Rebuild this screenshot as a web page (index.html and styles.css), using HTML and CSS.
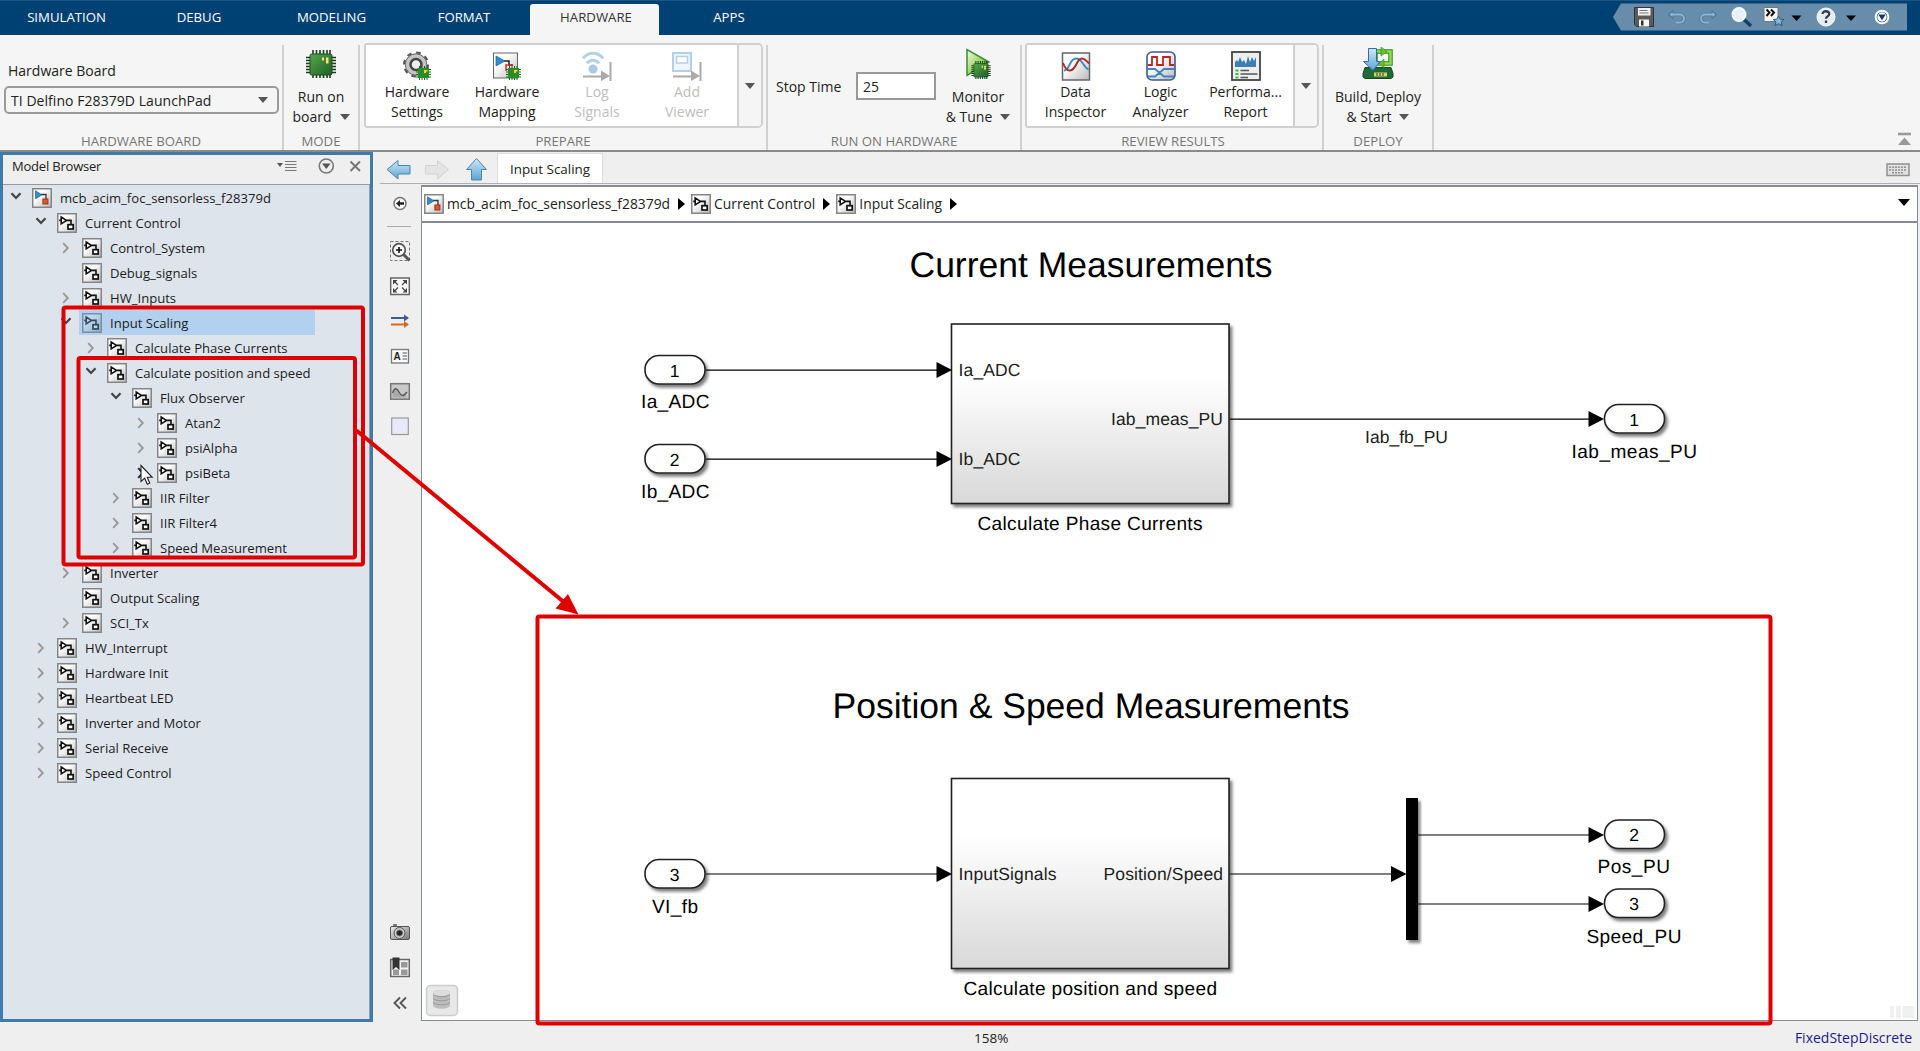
FILE: index.html
```html
<!DOCTYPE html>
<html lang="en">
<head>
<meta charset="utf-8">
<title>mcb_acim_foc_sensorless_f28379d - Simulink</title>
<link rel="stylesheet" href="styles.css">
</head>
<body>
<svg class="defs" width="0" height="0" aria-hidden="true">
  <defs>
    <linearGradient id="g-gray" x1="0" y1="0" x2="1" y2="1"><stop offset=".35" stop-color="#fff"/><stop offset="1" stop-color="#b9b9b9"/></linearGradient>
    <linearGradient id="g-block" x1="0" y1="0" x2="0" y2="1"><stop offset=".3" stop-color="#fff"/><stop offset="1" stop-color="#d8d8d8"/></linearGradient>
    <linearGradient id="g-chip" x1="0" y1="0" x2="1" y2="1"><stop offset="0" stop-color="#55a848"/><stop offset="1" stop-color="#1f5f2b"/></linearGradient>
    <linearGradient id="g-blue" x1="0" y1="0" x2="0" y2="1"><stop offset="0" stop-color="#cfe8f8"/><stop offset="1" stop-color="#5ba4d4"/></linearGradient>
    <linearGradient id="g-play" x1="0" y1="0" x2="1" y2="1"><stop offset="0" stop-color="#f2fbe6"/><stop offset=".7" stop-color="#7ec83a"/></linearGradient>
    <linearGradient id="g-metal" x1="0" y1="0" x2="1" y2="1"><stop offset="0" stop-color="#eee"/><stop offset="1" stop-color="#777"/></linearGradient>
  </defs>
  <symbol id="i-sub" viewBox="0 0 20 20"><rect x=".75" y=".75" width="18.5" height="18.5" fill="url(#g-gray)" stroke="#858585" stroke-width="1.5"/><path d="M4.200 4v6.800l5.300-3.400zM9.500 7.400h4.500v4.600M2.200 7.400h2" fill="none" stroke="#111" stroke-width="1.600"/><rect x="11" y="11.700" width="5.200" height="4.300" fill="#fff" stroke="#111" stroke-width="1.700"/></symbol>
  <symbol id="i-model" viewBox="0 0 20 20"><rect x=".75" y=".75" width="18.5" height="18.5" fill="url(#g-gray)" stroke="#858585" stroke-width="1.5"/><path d="M9 6.500h5v5" fill="none" stroke="#333" stroke-width="1.300"/><path d="M3.500 2.800v8l6.500-4z" fill="#2f8fd0" stroke="#1c5f94" stroke-width=".7"/><rect x="10.900" y="11" width="5" height="5" fill="#e2552a" stroke="#9a3512"/></symbol>
  <symbol id="i-open" viewBox="0 0 12 8"><path d="M1.500 1.200 6 6l4.500-4.800" fill="none" stroke="#444" stroke-width="2.200"/></symbol>
  <symbol id="i-closed" viewBox="0 0 8 12"><path d="M1.200 1.200 5.800 6l-4.600 4.800" fill="none" stroke="currentColor" stroke-width="1.900"/></symbol>
  <symbol id="i-chip" viewBox="0 0 30 28"><path d="M7 0v28M10.500 0v28M14 0v28M17.500 0v28M21 0v28M24 0v28M0 7.500h30M0 10.500h30M0 13.500h30M0 16.500h30M0 19.500h30M0 22.500h30" stroke="#173d1c" stroke-width="1.6"/><rect x="4" y="4" width="22" height="21" rx="1.500" fill="url(#g-chip)" stroke="#1b4f22"/><path d="M16 7.500h2v3h-2zM20 7.500h2.500v6H20z" fill="#ffe27a"/></symbol>
  <symbol id="i-minichip" viewBox="0 0 15 14"><path d="M3.500 0v14M6 0v14M8.500 0v14M11 0v14M0 3.500h15M0 6h15M0 8.500h15M0 11h15" stroke="#1b6a1b" stroke-width="1"/><rect x="2" y="2" width="11" height="10" fill="#2c8a2c"/><path d="M8 4h2v3H8zM10 4h1.500v1.500H10z" fill="#ffd91a"/></symbol>
</svg>

<header class="tabs">
  <nav class="tab-list">
    <a class="tab t-sim">SIMULATION</a><a class="tab t-debug">DEBUG</a><a class="tab t-model">MODELING</a><a class="tab t-format">FORMAT</a><a class="tab t-hw active">HARDWARE</a><a class="tab t-apps">APPS</a>
  </nav>
  <svg class="qat" width="294" height="28" viewBox="1613 3.500 294 28">
    <path d="M1613 17.500 1621 4h286v27h-286z" fill="#688dab"/>
    <path d="M1634.500 8h19v19h-17l-2-2z" fill="#5b5b5b" stroke="#333"/><path d="M1638 8.500h12.500v7.500H1638z" fill="#f2f2f2"/><path d="M1639.500 11h8M1639.500 13.500h9" stroke="#777"/><path d="M1639 20h10v7h-10z" fill="#f5f5f5"/><path d="M1641 21h2.500v5h-2.500z" fill="#333"/>
    <g fill="none" stroke="#4b7a9f" stroke-width="3.600"><path d="M1671 15h9a4 4 0 0 1 0 8h-4"/><path d="M1714 15h-9a4 4 0 0 0 0 8h4"/></g><path d="m1667.500 15 6-5v10zM1717.500 15l-6-5v10z" fill="#4b7a9f"/>
    <g fill="none" stroke="#8fb6d2" stroke-width="1.800"><path d="M1671 15h9a4 4 0 0 1 0 8h-4"/><path d="M1714 15h-9a4 4 0 0 0 0 8h4"/></g><path d="m1669.500 15 3-2.500v5zM1715.500 15l-3-2.500v5z" fill="#8fb6d2"/>
    <path d="m1743 19 8 7.500" stroke="#123e68" stroke-width="3.500"/><circle cx="1739" cy="15" r="6.500" fill="#e4eff7" stroke="#fafdff" stroke-width="2"/>
    <rect x="1764" y="8" width="14" height="14" fill="#f4f4f4" stroke="#777"/><path d="m1766.500 10 3 3-3 3.500M1771 10l3 3-3 3.500" fill="none" stroke="#111" stroke-width="2"/><path d="m1778.500 16.500 1.700 3.200 3.800.3-2.800 2.500 1 3.700-3.700-2-3.500 2 1-3.700-2.800-2.500 3.700-.3z" fill="#86b6dc" stroke="#33597c"/>
    <path d="M1791.500 16h10l-5 5.500zM1846 16h10l-5 5.500z" fill="#000"/>
    <circle cx="1826" cy="17.500" r="9" fill="#e7ecf1" stroke="#f8fafc"/><path d="M1822.600 14.600c0-4 6.800-3.600 6.600-.1-.1 2.500-3.200 2.200-3.200 4.800M1826 21v2.400" fill="none" stroke="#2e3f52" stroke-width="2.300"/>
    <circle cx="1882" cy="17.500" r="6.300" fill="#0b4274" stroke="#fff" stroke-width="2"/><circle cx="1882" cy="17.500" r="4.700" fill="#fff"/><path d="M1878.300 15h7.400l-3.700 5.800z" fill="#073b6c"/>
  </svg>
</header>

<section class="ribbon">
  <div class="group g-board">
    <div class="group-body board-body">
      <label class="lbl">Hardware Board</label>
      <div class="select"><span>TI Delfino F28379D LaunchPad</span><i class="caret"></i></div>
    </div>
    <div class="group-title">HARDWARE BOARD</div>
  </div>
  <div class="group g-mode">
    <div class="group-body big"><svg width="30" height="28"><use href="#i-chip"/></svg><div class="two"><span>Run on</span><span>board<i class="caret"></i></span></div></div>
    <div class="group-title">MODE</div>
  </div>
  <div class="group g-prepare">
    <div class="group-body">
      <div class="gallery">
        <div class="gitem w90 first"><svg width="30" height="30" viewBox="0 0 30 30"><circle cx="14" cy="13.500" r="11.500" fill="none" stroke="#555" stroke-width="3" stroke-dasharray="4.500 4.500"/><circle cx="14" cy="13.500" r="8.500" fill="none" stroke="#c5c5c5" stroke-width="5"/><circle cx="14" cy="13.500" r="10.700" fill="none" stroke="#666" stroke-width="1"/><circle cx="14" cy="13.500" r="5.500" fill="#eee" stroke="#444" stroke-width="2.500"/><use href="#i-minichip" x="14" y="15" width="15" height="14"/></svg><span>Hardware</span><span>Settings</span></div>
        <div class="gitem w90"><svg width="30" height="30" viewBox="0 0 30 30"><rect x="1.500" y="2" width="24" height="25" fill="url(#g-gray)" stroke="#666"/><path d="M12 10h5v4h4" fill="none" stroke="#222" stroke-width="1.500"/><path d="M4 5v10l9-5z" fill="#2f8fd0" stroke="#1c5f94" stroke-width=".7"/><path d="M14 20v-6h7" fill="none" stroke="#c33" stroke-width="1.500"/><use href="#i-minichip" x="14" y="15" width="15" height="14"/></svg><span>Hardware</span><span>Mapping</span></div>
        <div class="gitem w90 off"><svg width="30" height="30" viewBox="0 0 30 30"><g fill="none" stroke="#b4d0e8" stroke-width="3"><path d="M1 7.500c5-7 15-7 20 0"/><path d="M5 12.500c3-4.500 9-4.500 12 0"/></g><circle cx="11" cy="18" r="4.500" fill="#a9cae6"/><path d="M1 25.500h20M28.500 11v19" stroke="#aaa" stroke-width="2"/><path d="M19 19.500v10.500l9-5z" fill="#aaa"/></svg><span>Log</span><span>Signals</span></div>
        <div class="gitem w90 off"><svg width="30" height="30" viewBox="0 0 30 30"><rect x="1" y="2" width="18" height="18" fill="#eef5fb" stroke="#b4d0e8" stroke-width="2"/><rect x="4.500" y="5.500" width="11" height="6.500" fill="#fff" stroke="#b4d0e8" stroke-width="1.500"/><path d="M1 25.500h20M28.500 11v19" stroke="#aaa" stroke-width="2"/><path d="M19 19.500v10.500l9-5z" fill="#aaa"/></svg><span>Add</span><span>Viewer</span></div>
        <div class="more"><i class="caret"></i></div>
      </div>
    </div>
    <div class="group-title">PREPARE</div>
  </div>
  <div class="group g-run">
    <div class="group-body run-body">
      <span class="stop">Stop Time</span><div class="input">25</div>
      <div class="big"><svg class="mon" width="26" height="32" viewBox="0 0 26 32"><path d="M2 1.500v26l22-13.500z" fill="url(#g-play)" stroke="#3d8a32" stroke-width="1.500"/><use href="#i-chip" x="6" y="13" width="20" height="18"/></svg><div class="two"><span>Monitor</span><span>&amp; Tune<i class="caret"></i></span></div></div>
    </div>
    <div class="group-title">RUN ON HARDWARE</div>
  </div>
  <div class="group g-review">
    <div class="group-body">
      <div class="gallery">
        <div class="gitem w85 first2"><svg width="30" height="30" viewBox="0 0 30 30"><rect x="1.500" y="2" width="27" height="27" fill="url(#g-gray)" stroke="#666" stroke-width="1.500"/><path d="M3 19.500c6 0 5-12 12-12s6 8 12.500 11" fill="none" stroke="#3b8ac4" stroke-width="2"/><path d="M2 12c2 5 4 8 7 7.500 7-1 6-12 12-12 3 0 4 2 7 5" fill="none" stroke="#b02a2a" stroke-width="2"/></svg><span>Data</span><span>Inspector</span></div>
        <div class="gitem w85"><svg width="30" height="30" viewBox="0 0 30 30"><rect x="1" y="1" width="28" height="28" rx="5" fill="url(#g-gray)" stroke="#3c5a8a" stroke-width="1.600"/><path d="M2 14h4V6h5v8h6V6h7v8h4" fill="none" stroke="#c32222" stroke-width="1.800"/><path d="M2 18h7l9 7.500h10M2 25.500h7L18 18h10" fill="none" stroke="#3b86c2" stroke-width="1.800"/></svg><span>Logic</span><span>Analyzer</span></div>
        <div class="gitem w85"><svg width="30" height="30" viewBox="0 0 30 30"><rect x="1" y="1" width="28" height="28" fill="#eee" stroke="#444" stroke-width="1.800"/><path d="M4 16v-5l2-2 1 2 2-5 2 5 2-2 2 4 2-8 2 6 2-5 2 4 2-4v10z" fill="#3b7fb5"/><path d="M4.500 19.500h3M4.500 23h3M4.500 26.500h3" stroke="#3bbd3b" stroke-width="2"/><path d="M9.500 19.500H18M9.500 23h17M9.500 26.500H17" stroke="#555" stroke-width="1.500"/></svg><span>Performa...</span><span>Report</span></div>
        <div class="more"><i class="caret"></i></div>
      </div>
    </div>
    <div class="group-title">REVIEW RESULTS</div>
  </div>
  <div class="group g-deploy">
    <div class="group-body big"><svg class="dep" width="32" height="32" viewBox="0 0 32 32"><path d="M3 20.500h26l2 6v3.500l-2 1.500H3L1 30v-3.500z" fill="#1f6b36" stroke="#15471f"/><path d="M12 25.500h13v4H12z" fill="#d9cf6a"/><path d="M15 26v3M18 26v3M21 26v3" stroke="#15471f"/><rect x="13.500" y="4.500" width="15" height="12" fill="none" stroke="#2e8a1e" stroke-width="4.500"/><rect x="13.500" y="4.500" width="15" height="12" fill="none" stroke="#8fdc46" stroke-width="2.500"/><path d="m19 0 6 4.500-6 4.500zM22 12l-5 4.500 5 4.500z" fill="#6cc02e" stroke="#2e8a1e" stroke-width=".6"/><path d="M6.500 1.500h8v13h3.500l-7 9-9.500-9h5z" fill="url(#g-blue)" stroke="#2d6ea8"/></svg><div class="two"><span>Build, Deploy</span><span>&amp; Start<i class="caret"></i></span></div></div>
    <div class="group-title">DEPLOY</div>
  </div>
  <svg class="collapse" width="14" height="14"><path d="M0 2h13" stroke="#999" stroke-width="2.600"/><path d="M0 13 6.500 5.500 13 13z" fill="#999"/></svg>
</section>

<main class="work">
  <aside class="browser">
    <div class="browser-head"><span>Model Browser</span>
      <svg width="86" height="20" viewBox="276 156 86 20"><path d="M277 163h6l-3 4z" fill="#555"/><path d="M285 161.500h11.500M285 164.500h11.500M285 167.500h11.500M285 170.500h11.500" stroke="#777" stroke-width="1.200"/><circle cx="326.300" cy="166" r="7" fill="none" stroke="#777" stroke-width="1.600"/><path d="M322 163.500h8.600l-4.300 5.500z" fill="#555"/><path d="m350.500 161.500 9.500 9.500M360 161.500l-9.500 9.500" stroke="#777" stroke-width="2"/></svg>
    </div>
    <ul class="tree">
      <li class="l0"><svg class="op"><use href="#i-open"/></svg><svg class="ic"><use href="#i-model"/></svg><span>mcb_acim_foc_sensorless_f28379d</span></li>
      <li class="l1"><svg class="op"><use href="#i-open"/></svg><svg class="ic"><use href="#i-sub"/></svg><span>Current Control</span></li>
      <li class="l2"><svg class="cl"><use href="#i-closed"/></svg><svg class="ic"><use href="#i-sub"/></svg><span>Control_System</span></li>
      <li class="l2"><i class="none"></i><svg class="ic"><use href="#i-sub"/></svg><span>Debug_signals</span></li>
      <li class="l2"><svg class="cl"><use href="#i-closed"/></svg><svg class="ic"><use href="#i-sub"/></svg><span>HW_Inputs</span></li>
      <li class="l2 sel"><svg class="op"><use href="#i-open"/></svg><svg class="ic"><use href="#i-sub"/></svg><span>Input Scaling</span></li>
      <li class="l3"><svg class="cl"><use href="#i-closed"/></svg><svg class="ic"><use href="#i-sub"/></svg><span>Calculate Phase Currents</span></li>
      <li class="l3"><svg class="op"><use href="#i-open"/></svg><svg class="ic"><use href="#i-sub"/></svg><span>Calculate position and speed</span></li>
      <li class="l4"><svg class="op"><use href="#i-open"/></svg><svg class="ic"><use href="#i-sub"/></svg><span>Flux Observer</span></li>
      <li class="l5"><svg class="cl"><use href="#i-closed"/></svg><svg class="ic"><use href="#i-sub"/></svg><span>Atan2</span></li>
      <li class="l5"><svg class="cl"><use href="#i-closed"/></svg><svg class="ic"><use href="#i-sub"/></svg><span>psiAlpha</span></li>
      <li class="l5 hover"><svg class="cl"><use href="#i-closed"/></svg><svg class="ic"><use href="#i-sub"/></svg><span>psiBeta</span></li>
      <li class="l4"><svg class="cl"><use href="#i-closed"/></svg><svg class="ic"><use href="#i-sub"/></svg><span>IIR Filter</span></li>
      <li class="l4"><svg class="cl"><use href="#i-closed"/></svg><svg class="ic"><use href="#i-sub"/></svg><span>IIR Filter4</span></li>
      <li class="l4"><svg class="cl"><use href="#i-closed"/></svg><svg class="ic"><use href="#i-sub"/></svg><span>Speed Measurement</span></li>
      <li class="l2"><svg class="cl"><use href="#i-closed"/></svg><svg class="ic"><use href="#i-sub"/></svg><span>Inverter</span></li>
      <li class="l2"><i class="none"></i><svg class="ic"><use href="#i-sub"/></svg><span>Output Scaling</span></li>
      <li class="l2"><svg class="cl"><use href="#i-closed"/></svg><svg class="ic"><use href="#i-sub"/></svg><span>SCI_Tx</span></li>
      <li class="l1"><svg class="cl"><use href="#i-closed"/></svg><svg class="ic"><use href="#i-sub"/></svg><span>HW_Interrupt</span></li>
      <li class="l1"><svg class="cl"><use href="#i-closed"/></svg><svg class="ic"><use href="#i-sub"/></svg><span>Hardware Init</span></li>
      <li class="l1"><svg class="cl"><use href="#i-closed"/></svg><svg class="ic"><use href="#i-sub"/></svg><span>Heartbeat LED</span></li>
      <li class="l1"><svg class="cl"><use href="#i-closed"/></svg><svg class="ic"><use href="#i-sub"/></svg><span>Inverter and Motor</span></li>
      <li class="l1"><svg class="cl"><use href="#i-closed"/></svg><svg class="ic"><use href="#i-sub"/></svg><span>Serial Receive</span></li>
      <li class="l1"><svg class="cl"><use href="#i-closed"/></svg><svg class="ic"><use href="#i-sub"/></svg><span>Speed Control</span></li>
    </ul>
  </aside>

  <section class="editor">
    <div class="docbar">
      <svg width="117" height="30" viewBox="380 154 117 30"><path d="m387 170.500 11-9v5h12v8.500h-12v5z" fill="url(#g-blue)" stroke="#4b86ad"/><path d="m448.500 170.500-11-9v5h-12v8.500h12v5z" fill="#e4e4e4" stroke="#d2d2d2"/><path d="m476.500 159.500-10 11h5V181h10v-10.500h5z" fill="url(#g-blue)" stroke="#4b86ad"/></svg>
      <div class="doctab">Input Scaling</div>
      <svg class="kbd" width="24" height="14" viewBox="0 0 24 14"><rect x="1" y="1" width="22" height="11.500" fill="#e2e2e2" stroke="#909090" stroke-width="1.500"/><path d="M3 4.200h18M3 7h18M6 9.800h12" stroke="#909090" stroke-width="1.500" stroke-dasharray="2 1"/></svg>
    </div>
    <div class="edit-row">
      <div class="palette">
        <svg width="41" height="836" viewBox="380 185 41 836">
          <circle cx="400" cy="203.500" r="6" fill="#f8f8f8" stroke="#777" stroke-width="1.500"/><path d="m396 203.500 4-3.500v2.300h4v2.400h-4v2.300z" fill="#222"/>
          <path d="M387 226.500h24" stroke="#aaa"/>
          <rect x="390.500" y="241.500" width="19" height="19" fill="none" stroke="#777" stroke-dasharray="3 2"/><circle cx="399" cy="250" r="6.300" fill="#f6f6f6" stroke="#555" stroke-width="1.700"/><path d="M396 250h6M399 247v6" stroke="#111" stroke-width="1.600"/><path d="m403.500 254.500 6 6" stroke="#555" stroke-width="3"/>
          <rect x="390.700" y="278" width="18.600" height="16.500" fill="#fafafa" stroke="#666" stroke-width="1.500"/><path d="M393 280h4.500l-4.500 4.500zM407 280h-4.500l4.500 4.500zM393 292.500h4.500L393 288zM407 292.500h-4.500l4.500-4.500z" fill="#444"/><path d="m394 281 4 4M406 281l-4 4M394 291.500l4-4M406 291.500l-4-4" stroke="#444" stroke-width="1.200"/>
          <path d="M391 318h14" stroke="#3e5c92" stroke-width="2"/><path d="m404 314.500 5 3.500-5 3.500z" fill="#3e5c92"/><path d="M391 324.500h14" stroke="#d4662a" stroke-width="2"/><path d="m404 321 5 3.500-5 3.500z" fill="#d4662a"/>
          <rect x="391.500" y="349.500" width="17" height="13.500" fill="#fafafa" stroke="#777" stroke-width="1.300"/><path d="M402.500 353h4.500M402.500 356h4.500M402.500 359h4.500" stroke="#555" stroke-width="1.200"/><text x="393.500" y="360" class="pal-a">A</text>
          <rect x="390.700" y="383.700" width="18.600" height="15.500" fill="#c9c9c9" stroke="#777" stroke-width="1.500"/><path d="M392.500 393c2-6 4.500-5 6.500-1s4 5 7 0v5.500h-13.500z" fill="#aaa"/><path d="M392.500 393c2-6 4.500-5 6.500-1s4 5 8 0" fill="none" stroke="#555" stroke-width="1.300"/>
          <rect x="391.700" y="418" width="16.600" height="16.500" fill="#e8e8f8" stroke="#999" stroke-width="1.200"/>
          <rect x="390.500" y="926.500" width="19" height="13" rx="1.500" fill="url(#g-metal)" stroke="#555"/><path d="M393 925h4" stroke="#555" stroke-width="1.500"/><circle cx="399.500" cy="933" r="5.500" fill="#ccc" stroke="#555"/><circle cx="399.500" cy="933" r="3" fill="#222" stroke="#777"/>
          <rect x="390.700" y="959.500" width="18.600" height="17" fill="#f4f4f4" stroke="#666" stroke-width="1.500"/><path d="M401 962h6.500v5.500H401zM401 969.500h6.500v5.500H401zM393 969.500h6v5.500h-6z" fill="#999"/><path d="M392.500 957.500h7v12.500l-3.500-3-3.500 3z" fill="#333"/>
          <path d="m400 997.500-5.500 5.500 5.500 5.500M406 997.500l-5.500 5.500 5.500 5.500" fill="none" stroke="#555" stroke-width="1.900"/>
        </svg>
      </div>
      <div class="canvas-col">
        <div class="crumbs">
          <svg class="ic"><use href="#i-model"/></svg><span class="c1">mcb_acim_foc_sensorless_f28379d</span><i class="tri"></i>
          <svg class="ic"><use href="#i-sub"/></svg><span class="c2">Current Control</span><i class="tri"></i>
          <svg class="ic"><use href="#i-sub"/></svg><span class="c3">Input Scaling</span><i class="tri"></i>
          <i class="drop"></i>
        </div>
        <svg class="canvas" viewBox="422 223 1495 797">
          <defs>
            <filter id="sh" x="-20%" y="-20%" width="150%" height="160%"><feDropShadow dx="2.500" dy="3" stdDeviation="1.800" flood-color="#000" flood-opacity=".5"/></filter>
          </defs>
          <g class="title"><text x="909.500" y="276.500" textLength="363">Current Measurements</text><text x="832.500" y="717.500" textLength="517">Position &amp; Speed Measurements</text></g>
          <g class="blk" filter="url(#sh)"><rect x="951.500" y="324" width="277.500" height="179.500"/><rect x="951.500" y="778.500" width="277.500" height="190"/></g>
          <g class="port" filter="url(#sh)"><rect x="645" y="355.500" width="60" height="28.500" rx="14"/><rect x="645" y="444.500" width="60" height="28.500" rx="14"/><rect x="645" y="859.500" width="60" height="28.500" rx="14"/><rect x="1604.500" y="404.500" width="60" height="28.500" rx="14"/><rect x="1604.500" y="820" width="60" height="28.500" rx="14"/><rect x="1604.500" y="889" width="60" height="28.500" rx="14"/></g>
          <rect x="1406" y="798" width="12" height="142" filter="url(#sh)"/>
          <path class="wire" d="M706 370.200h232M706 459.200h232M706 874h232M1230 419.200h360M1230 874h163M1418 835h172M1418 904h172"/>
          <path d="m936.500 362 15.500 8-15.500 8zM936.500 451l15.500 8-15.500 8zM936.500 866l15.500 8-15.500 8zM1588.500 411l15.500 8-15.500 8zM1391 866l15.500 8-15.500 8zM1588.500 827l15.500 8-15.500 8zM1588.500 896l15.500 8-15.500 8z"/>
          <g class="num"><text x="674.500" y="376.500">1</text><text x="674.500" y="465.500">2</text><text x="674.500" y="880.500">3</text><text x="1634" y="425.800">1</text><text x="1634" y="841">2</text><text x="1634" y="910">3</text></g>
          <g class="inner"><text x="958.500" y="376" textLength="62">Ia_ADC</text><text x="958.500" y="465" textLength="62">Ib_ADC</text><text x="1111" y="425" textLength="112">Iab_meas_PU</text><text x="958.500" y="880" textLength="98">InputSignals</text><text x="1103.500" y="880" textLength="119.500">Position/Speed</text><text x="1365" y="442.500" textLength="83">Iab_fb_PU</text></g>
          <g class="outer"><text x="641" y="408" textLength="68.500">Ia_ADC</text><text x="641" y="498" textLength="68.500">Ib_ADC</text><text x="652" y="913" textLength="46">VI_fb</text><text x="977.500" y="529.500" textLength="225">Calculate Phase Currents</text><text x="963.500" y="994.500" textLength="253.500">Calculate position and speed</text><text x="1571.500" y="458" textLength="125.500">Iab_meas_PU</text><text x="1597.500" y="873" textLength="72.500">Pos_PU</text><text x="1586.500" y="943" textLength="95">Speed_PU</text></g>
          <rect x="426.500" y="985.500" width="31" height="30" rx="4" fill="#e8e8e8" stroke="#ccc" stroke-width="1.500"/><path d="M433 993c0-4 17-4 17 0v12c0 5-17 5-17 0z" fill="#bdbdbd"/><ellipse cx="441.500" cy="993" rx="8.500" ry="3" fill="#ddd"/><path d="M433 994.500c3 3 14 3 17 0M433 998.500c3 3 14 3 17 0M433 1002.500c3 3 14 3 17 0" fill="none" stroke="#999"/>
          <path d="M1890 1006h4v12h-4zM1896 1006h5v12h-5zM1902.500 1006h12v12h-12z" fill="#f0f0f0"/>
        </svg>
      </div>
    </div>
  </section>
</main>
<footer class="status"><span class="zoom">158%</span><span class="solver">FixedStepDiscrete</span></footer>

<svg class="annot" width="1920" height="1051" viewBox="0 0 1920 1051">
  <path d="M141 465.500v16l3.700-3.300 2.600 6 2.500-1.200-2.600-5.700h5z" fill="#fff" stroke="#222" stroke-width="1.100"/>
  <g class="mark"><rect x="63.500" y="307.500" width="299.500" height="257" rx="2"/><rect x="78.500" y="358" width="276.500" height="199.500" rx="2"/><rect x="537.500" y="616.500" width="1233" height="407" rx="2"/><path d="M356.500 430.500 565 603"/></g>
  <path d="M578.500 614.500 555.500 608.500 568 594z" fill="#de0000"/>
</svg>
</body>
</html>
```
FILE: styles.css
```css
* { box-sizing: border-box; }
body { margin: 0; width: 1920px; height: 1051px; overflow: hidden; display: flex; flex-direction: column; background: #efefef; color: #222; font: 14px/20px "Open Sans", "Noto Sans", sans-serif; }
svg { display: block; flex: none; }
.defs { position: absolute; }
i { font-style: normal; }

.tabs { height: 35px; flex: none; background: #004173; display: flex; justify-content: space-between; padding-right: 13px; border-top: 1px solid #1b5584; }
.tab-list { display: flex; align-items: flex-end; }
.tab { height: 31px; display: flex; justify-content: center; align-items: center; color: #fff; font-size: 13.2px; padding-bottom: 5px; }
.t-sim { width: 133px; } .t-debug { width: 132px; } .t-model { width: 133px; } .t-format { width: 132px; } .t-hw { width: 129px; } .t-apps { width: 140px; }
.tab.active { background: #f5f5f5; color: #333; border-radius: 3px 3px 0 0; padding-left: 3px; }
.qat { margin-top: 2px; }

.ribbon { height: 117px; flex: none; display: flex; background: #f5f5f5; border-bottom: 2px solid #8a8a8a; }
.group { display: flex; flex-direction: column; position: relative; border-right: 2px solid #d0d0d0; margin-top: 10px; height: 105px; }
.g-board { width: 284px; } .g-mode { width: 76px; } .g-prepare { width: 408px; } .g-run { width: 254px; } .g-review { width: 302px; } .g-deploy { width: 110px; }
.group-body { height: 86px; flex: none; }
.group-title { text-align: center; color: #757575; font-size: 13.2px; line-height: 20px; }
.g-review .group-title { padding-left: 2px; }
.caret { display: inline-block; border: 5px solid transparent; border-top: 6px solid #555; border-bottom: 0; }
.board-body { padding: 16px 0 0 4px; }
.lbl { display: block; padding-left: 4px; }
.select { margin-top: 5px; width: 275px; height: 28px; border: 2px solid #9b9b9b; border-radius: 5px; display: flex; align-items: center; justify-content: space-between; padding: 0 9px 0 5px; }
.select span { padding-top: 1px; letter-spacing: .05px; }
.big { display: flex; flex-direction: column; align-items: center; }
.group-body.big { padding-top: 5px; }
.big .two { margin-top: 9px; display: flex; flex-direction: column; align-items: center; }
.two .caret { margin: 0 0 2px 8px; }
.gallery { display: flex; margin: -2px 3px 0 4px; height: 85px; border: 2px solid #d0d0d0; border-radius: 3px 5px 5px 3px; background: #fff; }
.g-review .gallery { margin-left: 3px; }
.gitem { display: flex; flex-direction: column; align-items: center; padding-top: 6px; }
.gitem svg { margin-bottom: 1px; }
.w90 { width: 90px; } .w85 { width: 85px; } .first { margin-left: 6px; } .first2 { margin-left: 6px; }
.off { color: #bdbdbd; }
.more { margin-left: auto; width: 24px; border-left: 2px solid #d0d0d0; background: #f5f5f5; display: flex; align-items: center; justify-content: center; border-radius: 0 4px 4px 0; }
.run-body { display: flex; }
.stop { margin: 32px 0 0 8px; width: 80px; }
.input { margin-top: 27px; width: 80px; height: 28px; border: 2px solid #999; background: #fff; padding: 3px 5px; }
.run-body .big { margin-left: 6px; margin-top: 3px; width: 72px; }
.mon { margin-bottom: -2px; }
.dep { margin-top: -3px; }
.group-body.big .dep + .two { margin-top: 8px; }
.collapse { margin: 97px 8px 0 auto; }

.work { flex: 1; min-height: 0; display: flex; }
.browser { width: 373px; height: 870px; flex: none; border: 3px solid #3f7ba9; background: #dee4ec; display: flex; flex-direction: column; }
.browser-head { height: 30px; flex: none; background: #efefef; border-bottom: 1px solid #999; display: flex; align-items: center; justify-content: space-between; padding: 0 8px 7px 9px; font-size: 13px; letter-spacing: -.2px; }
.tree { list-style: none; margin: 0; padding: 0; flex: 1; font-size: 13.1px; color: #1c1c1c; border-right: 1px solid #9aa3ad; }
.tree li { height: 25px; display: flex; align-items: center; }
.tree span { padding-top: 1px; }
.tree .ic { width: 20px; height: 20px; margin-right: 8px; }
.op { width: 12px; height: 8px; margin: 0 10px 3px 7px; }
.cl { width: 8px; height: 12px; margin: 0 12px 0 9px; color: #999; }
.hover .cl { color: #222; }
.none { width: 29px; }
.l1 { padding-left: 25px; } .l2 { padding-left: 50px; } .l3 { padding-left: 75px; } .l4 { padding-left: 100px; } .l5 { padding-left: 125px; }
.sel { background: linear-gradient(#b3d1ef, #b3d1ef) 76px 0 / 236px 25px no-repeat; }
.sel .ic { background: #5f9fd6; }
.sel .ic use { opacity: .6; }

.editor { flex: 1; min-width: 0; display: flex; flex-direction: column; padding-left: 7px; }
.docbar { height: 32px; flex: none; display: flex; align-items: flex-end; border-bottom: 1px solid #b0b0b0; }
.doctab { width: 106px; height: 30px; background: #fff; border: 1px solid #ddd; border-bottom: 0; text-align: center; font-size: 13.4px; line-height: 31px; }
.kbd { margin: 0 10px 6px auto; }
.edit-row { flex: 1; display: flex; min-height: 0; padding-top: 1px; }
.palette { width: 41px; flex: none; }
.pal-a { font: bold 10px "Liberation Sans", sans-serif; fill: #222; }
.canvas-col { width: 1497px; height: 836px; border: 1px solid #868c96; border-top-width: 2px; background: #fff; display: flex; flex-direction: column; }
.crumbs { height: 36px; flex: none; border-bottom: 2px solid #868c96; display: flex; align-items: center; padding-left: 2px; font-size: 13.85px; }
.crumbs .ic { width: 20px; height: 20px; margin-right: 3px; }
.tri { border: 6px solid transparent; border-left: 7px solid #000; border-right: 0; margin: 0 6px 0 8px; }
.drop { margin: 0 7px 4px auto; border: 6px solid transparent; border-top: 7px solid #000; border-bottom: 0; }
.canvas { width: 1495px; height: 797px; font-family: "Liberation Sans", Arial, sans-serif; fill: #000; text-rendering: geometricPrecision; }
.title { font-size: 35.5px; }
.blk { fill: url(#g-block); stroke: #222; stroke-width: 1.6px; }
.port { fill: #fff; stroke: #222; stroke-width: 1.6px; }
.wire { stroke: #000; stroke-width: 1.2px; fill: none; }
.num { font-size: 17.5px; text-anchor: middle; }
.inner { font-size: 17.5px; fill: #1c1c1c; }
.outer { font-size: 19.1px; }

.status { height: 27px; flex: none; display: flex; align-items: center; padding: 1px 8px 0 0; }
.zoom { margin-left: 974px; font-size: 13.5px; }
.solver { margin-left: auto; color: #1a1a96; }
.annot { position: absolute; left: 0; top: 0; pointer-events: none; }
.mark { fill: none; stroke: #de0000; stroke-width: 4px; }
```
